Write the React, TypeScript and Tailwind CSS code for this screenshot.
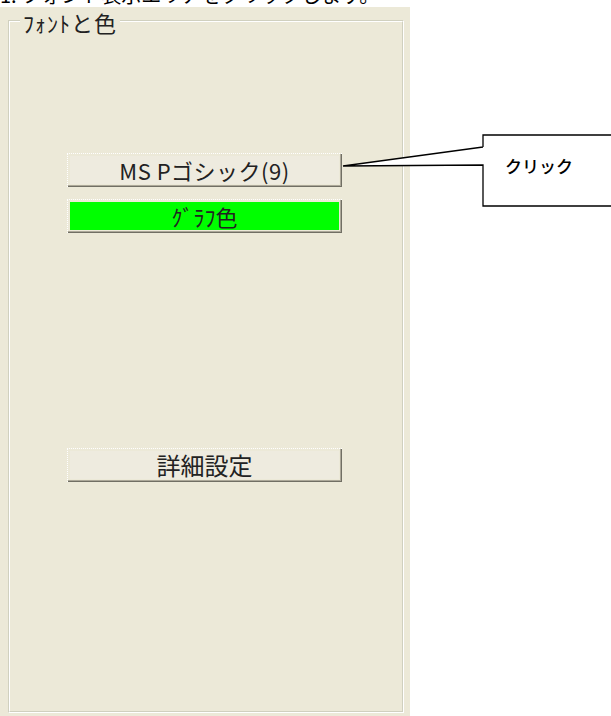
import React from 'react';

const FONT = '"Noto Sans CJK JP", "Noto Sans", sans-serif';

// XP-style push button with a dotted focus edge on the top/left and a dark shadow on the bottom/right
const XpButton = ({ children, face = 'bg-[#EEEBDF]' }: { children: React.ReactNode; face?: string }) => (
    <div className="w-[275px] h-[34px] border-t border-l border-dotted border-white shadow-[inset_-1px_-1px_0_#716F64,inset_-2px_-2px_0_#ACA899] p-[2px] pr-[3px] pb-[3px]">
        <div className={`w-full h-full flex items-center justify-center ${face}`}>
            {children}
        </div>
    </div>
);

export default function App() {
    return (
        <div className="relative w-[611px] h-[716px] bg-white overflow-hidden text-black" style={{ fontFamily: FONT }}>
            {/* Instruction line (cut off at the top of the capture) */}
            <div className="flex h-[7px]">
                <p className="-mt-[15px] text-[20px] leading-[20px] whitespace-nowrap">1. フォント表示エリアをクリックします。</p>
            </div>

            {/* Dialog panel */}
            <div className="w-[410px] h-[709px] bg-[#ECE9D8] pl-[8px] pt-[13px] pb-[3px]">
                {/* Group box: etched border */}
                <div className="relative w-[396px] h-full border-t border-l border-t-[#D0D0BF] border-l-[#D0D0BF] border-b border-r border-b-white border-r-white">
                    <div className="w-full h-full border-t border-l border-t-white border-l-white border-b border-r border-b-[#D0D0BF] border-r-[#D0D0BF] pl-[57px] pt-[131px]">
                        <XpButton>
                            <span className="text-[22px] leading-none tracking-[0.5px] text-[#222]">MS Pゴシック(9)</span>
                        </XpButton>
                        <div className="h-[12px]" />
                        <XpButton face="bg-[#00FF00]">
                            <span className="text-[22px] leading-none text-[#222]">ｸﾞﾗﾌ色</span>
                        </XpButton>
                        <div className="h-[215px]" />
                        <XpButton>
                            <span className="text-[24px] leading-none text-[#222]">詳細設定</span>
                        </XpButton>
                    </div>
                    <span className="absolute left-[11px] top-[-11px] bg-[#ECE9D8] px-[3px] text-[22px] leading-[24px] tracking-[1px] text-[#222]">ﾌｫﾝﾄと色</span>
                </div>
            </div>

            {/* Callout annotation */}
            <svg className="absolute left-0 top-0" width="611" height="716" viewBox="0 0 611 716" fill="none">
                <path d="M483 147 L483 135 L614 135 L614 206 L483 206 L483 165 L343 166 L483 147" stroke="#000" strokeWidth="1.3" fill="#fff" />
            </svg>
            <span className="absolute left-[505px] top-[154px] text-[17px] leading-[24px] font-medium">クリック</span>
        </div>
    );
}
